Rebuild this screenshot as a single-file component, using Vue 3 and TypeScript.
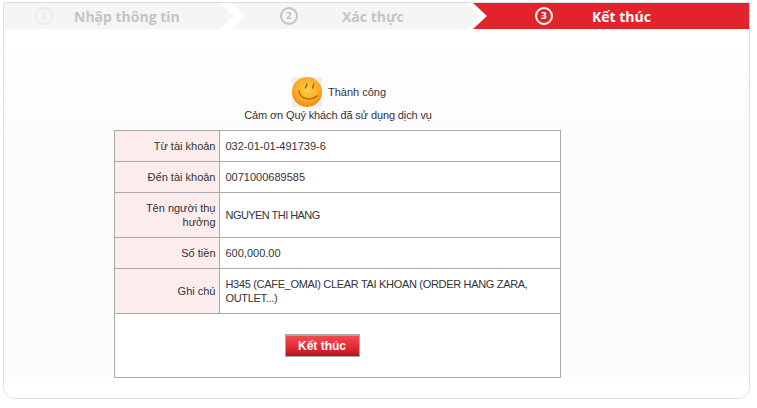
<script setup lang="ts">
interface Row { label: string; value: string; tight?: string }
const rows: Row[] = [
  { label: 'Từ tài khoản', value: '032-01-01-491739-6' },
  { label: 'Đến tài khoản', value: '0071000689585' },
  { label: 'Tên người thụ hưởng', value: 'NGUYEN THI HANG', tight: 'tight-name' },
  { label: 'Số tiền', value: '600,000.00' },
  { label: 'Ghi chú', value: 'H345 (CAFE_OMAI) CLEAR TAI KHOAN (ORDER HANG ZARA, OUTLET...)', tight: 'tight-note' },
]
</script>

<template>
  <div class="page">
    <div class="panel">
      <div class="steps">
        <div class="step step-one">
          <span class="num faint">1</span>
          <span class="title">Nhập thông tin</span>
        </div>
        <div class="step step-two">
          <span class="num">2</span>
          <span class="title">Xác thực</span>
        </div>
        <div class="step step-three">
          <span class="num">3</span>
          <span class="title">Kết thúc</span>
        </div>
      </div>
      <div class="body">
        <div class="status">
          <svg class="smile" width="30" height="30" viewBox="0 0 30 30">
            <defs>
              <radialGradient id="face" cx="50%" cy="40%" r="65%">
                <stop offset="0%" stop-color="#ffcf4d" />
                <stop offset="60%" stop-color="#fdab22" />
                <stop offset="100%" stop-color="#ee7d10" />
              </radialGradient>
            </defs>
            <rect width="30" height="30" fill="#eeeeee" />
            <circle cx="15" cy="15" r="15" fill="url(#face)" />
            <path d="M7 14c1 7 10 11 18 5" fill="none" stroke="#b5620f" stroke-width="1.4" stroke-linecap="round" />
            <path d="M14.8 7 13.6 11M21.8 7 20.6 11" fill="none" stroke="#a85a10" stroke-width="1.4" stroke-linecap="round" />
          </svg>
          <span>Thành công</span>
        </div>
        <p class="thanks">Cảm ơn Quý khách đã sử dụng dịch vụ</p>
        <table class="info">
          <tbody>
            <tr v-for="row in rows" :key="row.label">
              <th>{{ row.label }}</th>
              <td :class="row.tight">{{ row.value }}</td>
            </tr>
            <tr>
              <td class="actions" colspan="2">
                <button class="finish" type="button">Kết thúc</button>
              </td>
            </tr>
          </tbody>
        </table>
      </div>
    </div>
  </div>
</template>

<style>
html, body { margin: 0; background: #fff; }
</style>

<style scoped>
.page {
  width: 757px;
  height: 408px;
  padding: 2px 7px 0 3px;
  box-sizing: border-box;
  font-family: "Liberation Sans", Arial, sans-serif;
  font-size: 11px;
  color: #333;
}
.panel {
  height: 397px;
  box-sizing: border-box;
  border: 1px solid #dedede;
  border-radius: 0 0 12px 12px;
  overflow: hidden;
  display: flex;
  flex-direction: column;
}
.steps {
  display: flex;
  height: 26px;
  flex: none;
}
.step {
  position: relative;
  display: flex;
  align-items: center;
  flex: none;
  height: 26px;
  box-sizing: border-box;
  background: #f5f5f5;
  color: #c4c4c4;
  font-family: "Open Sans", "DejaVu Sans", sans-serif;
  font-size: 14px;
  font-weight: 700;
}
.step-one {
  width: 229px;
  padding-left: 31px;
  clip-path: polygon(0 0, 216px 0, 229px 13px, 216px 26px, 0 26px);
}
.step-two {
  width: 248px;
  margin-left: -1px;
  padding-left: 48px;
  clip-path: polygon(0 0, 235px 0, 248px 13px, 235px 26px, 0 26px, 13px 13px);
}
.step-three {
  width: 276px;
  margin-left: -7px;
  padding-left: 62px;
  background: #e3232b;
  color: #fff;
  clip-path: polygon(0 0, 100% 0, 100% 100%, 0 100%, 14px 13px);
}
.num {
  flex: none;
  box-sizing: border-box;
  width: 18px;
  height: 18px;
  border: 2px solid currentColor;
  border-radius: 50%;
  display: flex;
  align-items: center;
  justify-content: center;
  font-family: "DejaVu Sans", sans-serif;
  font-size: 9px;
  line-height: 1;
}
.num.faint { color: #ececec; }
.step-one .title { margin-left: 21px; }
.step-two .title { margin-left: 44px; }
.step-three .title { margin-left: 39px; }
.body {
  flex: 1;
  display: flex;
  flex-direction: column;
  align-items: center;
  background: linear-gradient(#ffffff, #fcfcfc 120px, #fcfcfc 348px, #ffffff 349px);
  padding-top: 48px;
  padding-right: 78px;
}
.status {
  display: flex;
  align-items: center;
  gap: 6px;
  height: 30px;
  margin-left: 3px;
}
.smile { display: block; }
.thanks {
  margin: 1px 0 0 1px;
  height: 14px;
  line-height: 14px;
  letter-spacing: -0.12px;
}
.info {
  width: 447px;
  margin: 8px 0 0 -1px;
  border-collapse: collapse;
  table-layout: fixed;
  background: #fff;
}
.info th, .info td {
  border: 1px solid #a9a9a9;
  padding: 8px 5px 8px 6px;
  line-height: 14px;
  font-size: 11px;
  font-weight: 400;
  color: #333;
}
.info th {
  width: 95px;
  padding-right: 3px;
  text-align: right;
  background: #fdecec;
}
.info td.tight-name { letter-spacing: -0.55px; }
.info td.tight-note { letter-spacing: -0.32px; }
.info td.actions {
  height: 64px;
  box-sizing: border-box;
  padding: 20px 30px 0 0;
  text-align: center;
  vertical-align: top;
}
.finish {
  width: 75px;
  height: 23px;
  padding: 0;
  border: 1px solid #a9a9a9;
  border-top: 2px solid #a9a9a9;
  background: linear-gradient(#f04a50, #e62e36 50%, #b9141c);
  color: #fff;
  font-family: "Liberation Sans", Arial, sans-serif;
  font-size: 12px;
  font-weight: 700;
}
</style>
